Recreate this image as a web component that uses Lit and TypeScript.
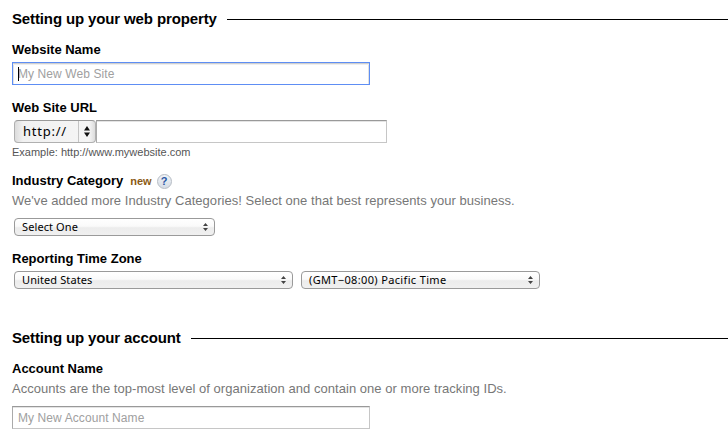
import { LitElement, html, svg, css } from "lit";
import { customElement, property } from "lit/decorators.js";

@customElement("section-heading")
class SectionHeading extends LitElement {
  static styles = css`
    :host { display: flex; align-items: center; height: 22px; }
    .title { font: bold 15px/22px "Liberation Sans", Arial, sans-serif; letter-spacing: -0.13px; color: #000; white-space: nowrap; }
    .rule { flex: 1; height: 1px; margin-left: 10px; background: #000; }
  `;
  render() {
    return html`<span class="title"><slot></slot></span><span class="rule"></span>`;
  }
}

@customElement("text-field")
class TextField extends LitElement {
  @property() placeholder = "";
  @property({ type: Boolean, reflect: true }) active = false;
  static styles = css`
    :host { display: block; position: relative; height: 23px; }
    .input {
      display: block; box-sizing: border-box; width: 100%; height: 23px; margin: 0; padding: 0 5px;
      border: 1px solid #c6c6c6; border-top-color: #999; border-left-color: #aaa; border-radius: 0; outline: none; background: #fff;
      box-shadow: inset 0 1px 0 #e4e4e4;
      font: 12px/21px "Liberation Sans", Arial, sans-serif; letter-spacing: 0.09px; color: #000;
    }
    .input::placeholder { color: #a0a0a0; opacity: 1; }
    :host([active]) .input { border-color: #5e8ef4; box-shadow: inset 0 1px 0 #cfcfcf, inset 0 2px 0 #efefef, inset -1px 0 0 #e2e2e2, inset 1px 0 0 #e2e2e2; }
    .caret { position: absolute; left: 6px; top: 5px; width: 1px; height: 14px; background: #000; }
  `;
  render() {
    return html`<input class="input" type="text" placeholder=${this.placeholder} />
      ${this.active ? html`<span class="caret"></span>` : ""}`;
  }
}

@customElement("popup-select")
class PopupSelect extends LitElement {
  @property({ reflect: true }) variant = "small";
  static styles = css`
    :host { display: block; letter-spacing: 0.1px; }
    .box {
      display: flex; align-items: center; box-sizing: border-box; height: 18px; padding: 0 6px 0 7px;
      border: 1px solid #9a9a9a; border-radius: 4px;
      background: linear-gradient(#fff, #fafafa 45%, #ececec 55%, #f0f0f0);
      color: #000; white-space: nowrap;
    }
    .text { flex: 1; font: 11px/16px "Noto Sans", "Open Sans", sans-serif; }
    .arrows { display: block; width: 5px; height: 8px; fill: #444; }
    :host([variant="large"]) { letter-spacing: 0.75px; }
    :host([variant="large"]) .box {
      height: 23px; padding: 0 0 0 8px; border-color: #b0b0b0; border-top-color: #999;
      background: linear-gradient(90deg, #dcdcdc, #f1f1f1 8px, #f5f5f5 74px, #dcdcdc);
    }
    :host([variant="large"]) .text { font-size: 13px; line-height: 21px; }
    .divider { width: 1px; height: 21px; background: #c4c4c4; }
    :host([variant="large"]) .arrows { width: 6px; height: 11px; margin: 0 5px; fill: #111; }
  `;
  render() {
    const large = this.variant === "large";
    return html`<div class="box">
      <span class="text"><slot></slot></span>
      ${large ? html`<span class="divider"></span>` : ""}
      <svg class="arrows" viewBox=${large ? "0 0 6 11" : "0 0 5 8"}>
        ${large
          ? svg`<path d="M3 0L6 4.5H0zM3 11L6 6.5H0z" />`
          : svg`<path d="M2.5 0L5 3H0zM2.5 8L5 5H0z" />`}
      </svg>
    </div>`;
  }
}

@customElement("app-root")
class AppRoot extends LitElement {
  static styles = css`
    :host {
      display: block; box-sizing: border-box; height: 435px; padding: 8px 0 0 12px; overflow: hidden;
      background: #fff; font-family: "Liberation Sans", Arial, sans-serif;
    }
    .label { height: 18px; font-size: 13px; line-height: 18px; font-weight: bold; color: #000; white-space: nowrap; }
    .desc { height: 18px; margin-top: 2px; font-size: 13px; line-height: 18px; letter-spacing: 0.04px; color: #777; white-space: nowrap; }
    .field { margin-top: 11px; }
    .name { width: 358px; margin-top: 3px; }
    .url { display: flex; margin: 3px 0 0 2px; }
    .scheme { width: 82px; }
    .address { width: 291px; }
    .example { height: 14px; margin-top: 2px; font-size: 11px; line-height: 14px; color: #555; white-space: nowrap; }
    .category { display: flex; align-items: center; margin-top: 13px; }
    .new { margin-left: 7px; font-size: 11px; font-weight: bold; line-height: 18px; color: #8b5a14; }
    .help {
      box-sizing: border-box; width: 15px; height: 15px; margin-left: 5px; border: 1px solid #b6bcc4; border-radius: 50%;
      background: linear-gradient(#f0f3f7, #d5dce5); color: #2a57a5;
      font-size: 11px; font-weight: bold; line-height: 13px; text-align: center;
    }
    .category-select { width: 201px; margin: 8px 0 0 2px; }
    .site-label { margin-top: 14px; }
    .zone-label { margin-top: 14px; }
    .zones { display: flex; gap: 8px; margin: 3px 0 0 2px; }
    .country { width: 279px; }
    .offset { width: 239px; letter-spacing: 0.35px; }
    .account { margin-top: 38px; }
    .account-name { width: 358px; margin-top: 8px; }
  `;
  render() {
    return html`
      <section-heading>Setting up your web property</section-heading>
      <div class="label field">Website Name</div>
      <text-field class="name" active placeholder="My New Web Site"></text-field>
      <div class="label site-label">Web Site URL</div>
      <div class="url">
        <popup-select class="scheme" variant="large">http://</popup-select>
        <text-field class="address"></text-field>
      </div>
      <div class="example">Example: http://www.mywebsite.com</div>
      <div class="category">
        <span class="label">Industry Category</span>
        <span class="new">new</span>
        <span class="help">?</span>
      </div>
      <div class="desc">We've added more Industry Categories! Select one that best represents your business.</div>
      <popup-select class="category-select">Select One</popup-select>
      <div class="label zone-label">Reporting Time Zone</div>
      <div class="zones">
        <popup-select class="country">United States</popup-select>
        <popup-select class="offset">(GMT−08:00) Pacific Time</popup-select>
      </div>
      <section-heading class="account">Setting up your account</section-heading>
      <div class="label field">Account Name</div>
      <div class="desc">Accounts are the top-most level of organization and contain one or more tracking IDs.</div>
      <text-field class="account-name" placeholder="My New Account Name"></text-field>
    `;
  }
}
